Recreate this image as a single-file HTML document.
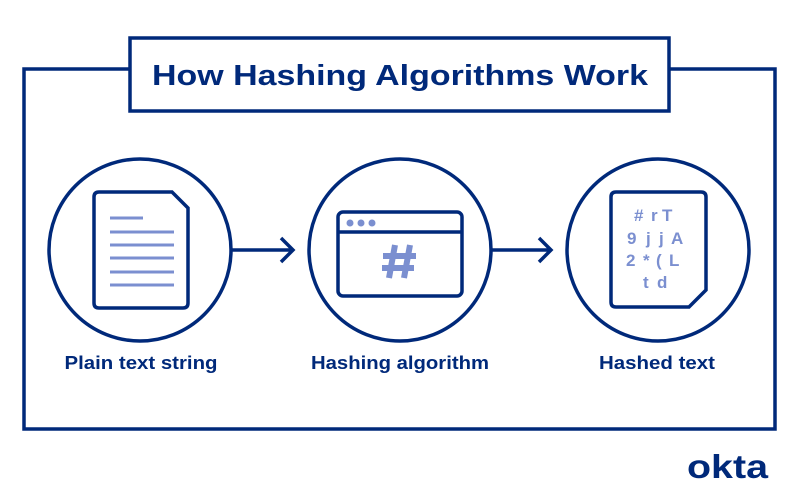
<!DOCTYPE html>
<html><head><style>
html,body{margin:0;padding:0;background:#fff;}
svg{display:block}
text{font-family:"Liberation Sans",sans-serif;font-weight:bold;white-space:pre;}
</style></head><body>
<svg width="800" height="500" viewBox="0 0 800 500" xmlns="http://www.w3.org/2000/svg">
<g fill="none" stroke="#00297a" stroke-width="3.5">
<path d="M129 69 H24 V429 H775 V69 H670"/>
<rect x="130" y="38" width="539" height="73"/>
<circle cx="140" cy="250" r="91"/>
<circle cx="400" cy="250" r="91"/>
<circle cx="658" cy="250" r="91"/>
<path d="M231 250 H292 M281 238 L293 250 L281 262"/>
<path d="M491 250 H550 M539 238 L551 250 L539 262"/>
<path d="M99 192 H172 L188 208 V303 Q188 308 183 308 H99 Q94 308 94 303 V197 Q94 192 99 192 Z"/>
<rect x="338" y="212" width="124" height="84" rx="5"/>
<path d="M338 232 H462"/>
<path d="M616 192 H701 Q706 192 706 197 V290 L689 307 H616 Q611 307 611 302 V197 Q611 192 616 192 Z"/>
</g>
<g stroke="#7b8fd0" stroke-width="3">
<path d="M110 218 H143 M110 232 H174 M110 245 H174 M110 258 H174 M110 272 H174 M110 285 H174"/>
</g>
<g stroke="#7b8fd0" stroke-width="6" fill="none">
<path d="M395 245 L389 278 M410 245 L404 278 M383 256 H416 M382 268 H414"/>
</g>
<g fill="#7b8fd0">
<circle cx="350" cy="223" r="3.5"/><circle cx="361" cy="223" r="3.5"/><circle cx="372" cy="223" r="3.5"/>
<g font-size="17">
<text x="634" y="221">#</text><text x="651" y="221">r</text><text x="662" y="221">T</text>
<text x="627" y="244">9</text><text x="646" y="244">j</text><text x="659" y="244">j</text><text x="671" y="244">A</text>
<text x="626" y="266">2</text><text x="643" y="266">*</text><text x="656" y="266">(</text><text x="669" y="266">L</text>
<text x="643" y="288">t</text><text x="657" y="288">d</text>
</g>
</g>
<g fill="#00297a">
<text x="400" y="85" font-size="29" text-anchor="middle" textLength="496" lengthAdjust="spacingAndGlyphs">How Hashing Algorithms Work</text>
<text x="141" y="369" font-size="18" text-anchor="middle" textLength="153" lengthAdjust="spacingAndGlyphs">Plain text string</text>
<text x="400" y="369" font-size="18" text-anchor="middle" textLength="178" lengthAdjust="spacingAndGlyphs">Hashing algorithm</text>
<text x="657" y="369" font-size="18" text-anchor="middle" textLength="116" lengthAdjust="spacingAndGlyphs">Hashed text</text>
<text x="687" y="478" font-size="33" textLength="81" lengthAdjust="spacingAndGlyphs">okta</text>
</g>
</svg>
</body></html>
